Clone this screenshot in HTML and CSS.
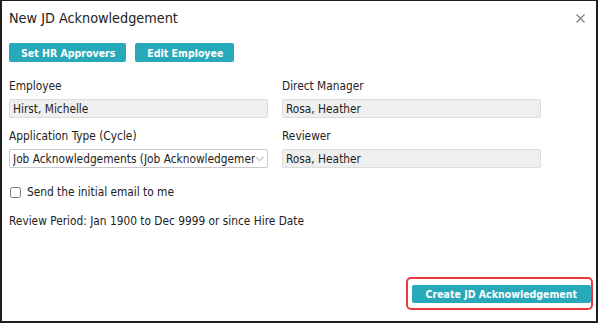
FILE: index.html
```html
<!DOCTYPE html>
<html lang="en">
<head>
  <meta charset="UTF-8" />
  <title>New JD Acknowledgement</title>
  <link rel="stylesheet" href="styles.css">
</head>
<body>
  <div class="modal">
    <div class="modal-header">
      <h1>New JD Acknowledgement</h1>
      <svg class="close" width="9" height="9" viewBox="0 0 9 9"><path d="M0.5 0.5 L8.5 8.5 M8.5 0.5 L0.5 8.5" stroke="#7a7a7a" stroke-width="1.1"/></svg>
    </div>

    <div class="acciones">
      <button class="btn">Set HR Approvers</button>
      <button class="btn">Edit Employee</button>
    </div>

    <div class="campos">
      <div class="campo">
        <label>Employee</label>
        <div class="valor">Hirst, Michelle</div>
      </div>
      <div class="campo">
        <label>Direct Manager</label>
        <div class="valor">Rosa, Heather</div>
      </div>
      <div class="campo">
        <label>Application Type (Cycle)</label>
        <div class="select">
          <span class="select-text">Job Acknowledgements (Job Acknowledgements)</span>
          <svg class="flecha" width="9" height="6" viewBox="0 0 9 6"><path d="M0.5 0.8 L4.5 4.8 L8.5 0.8" fill="none" stroke="#999" stroke-width="1"/></svg>
        </div>
      </div>
      <div class="campo">
        <label>Reviewer</label>
        <div class="valor">Rosa, Heather</div>
      </div>
    </div>

    <div class="check">
      <input type="checkbox" id="enviar"><label for="enviar">Send the initial email to me</label>
    </div>

    <p class="periodo">Review Period: Jan 1900 to Dec 9999 or since Hire Date</p>

    <div class="pie">
      <div class="resaltado">
        <button class="btn btn-crear">Create JD Acknowledgement</button>
      </div>
    </div>
  </div>
</body>
</html>
```

FILE: styles.css
```css
html, body {
  margin: 0;
  padding: 0;
  background: #ffffff;
}
body {
  font-family: 'DejaVu Sans Condensed', 'DejaVu Sans', sans-serif;
  font-size: 11.8px;
  color: #222;
}
.modal {
  box-sizing: border-box;
  width: 598px;
  height: 323px;
  border: 2px solid #1e1e1e;
  border-top-width: 1px;
  padding: 0 7px;
  display: flex;
  flex-direction: column;
}
.modal-header {
  display: flex;
  justify-content: space-between;
  align-items: center;
  height: 33px;
}
h1 {
  font-size: 14.3px;
  font-weight: normal;
  margin: 0;
  padding-top: 1px;
  color: #222;
}
.close {
  margin-right: 4px;
  margin-top: 1px;
}
.acciones {
  display: flex;
  gap: 9px;
  margin-top: 9px;
}
.btn {
  font-family: inherit;
  font-size: 10.5px;
  font-weight: bold;
  background-color: #27a9b9;
  color: #ffffff;
  border: none;
  border-radius: 2px;
  height: 19px;
  padding: 0 11px 0 12px;
  cursor: pointer;
}
.campos {
  display: grid;
  grid-template-columns: 259px 259px;
  column-gap: 14px;
  row-gap: 11px;
  margin-top: 17px;
}
.campo label {
  display: block;
  margin-bottom: 6px;
}
.valor, .select {
  box-sizing: border-box;
  height: 19px;
  border: 1px solid #dcdcdc;
  border-radius: 2px;
  background-color: #efefef;
  padding: 0 3px;
  display: flex;
  align-items: center;
  color: #222;
}
.select {
  background-color: #ffffff;
  border-color: #c9c9c9;
  justify-content: space-between;
}
.select-text {
  white-space: nowrap;
  overflow: hidden;
  width: 243px;
}
.flecha {
  flex-shrink: 0;
}
.check {
  display: flex;
  align-items: center;
  margin-top: 17px;
}
.check input {
  margin: 0 6px 0 1px;
  width: 11px;
  height: 11px;
}
.periodo {
  margin: 15px 0 0 0;
}
.pie {
  margin-top: auto;
  display: flex;
  justify-content: flex-end;
  padding-bottom: 11px;
}
.resaltado {
  border: 2px solid #e83a3f;
  border-radius: 5px;
  padding: 6px 0 5px 4px;
  margin-right: -4px;
}
.btn-crear {
  height: 18px;
  padding: 0 14px 0 14px;
}
```
